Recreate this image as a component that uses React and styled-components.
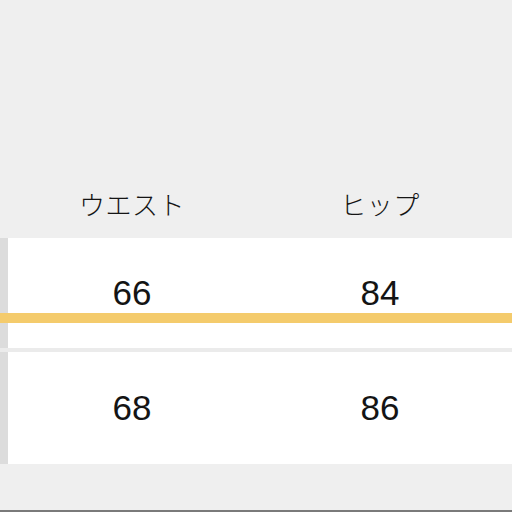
import styled, { createGlobalStyle } from 'styled-components';

const GlobalStyle = createGlobalStyle`
  html, body {
    margin: 0;
    padding: 0;
    background: #efefef;
  }
`;

const Page = styled.div`
  width: 512px;
  height: 512px;
  overflow: hidden;
  background: #efefef;
  display: flex;
  flex-direction: column;
  box-sizing: border-box;
  border-bottom: 2px solid #7a7a7a;
`;

const Table = styled.div`
  margin-top: 168px;
  display: flex;
  flex-direction: column;
`;

const HeaderRow = styled.div`
  display: flex;
  height: 70px;
  padding-left: 8px;
`;

const HeadCell = styled.div`
  flex: 0 0 248px;
  display: flex;
  align-items: center;
  justify-content: center;
  font-family: "Noto Sans CJK JP", "Liberation Sans", sans-serif;
  font-size: 26px;
  font-weight: 300;
  color: #151515;
  letter-spacing: 0.5px;
`;

const Row = styled.div`
  position: relative;
  display: flex;
  height: ${({ $h }) => $h}px;
  background: #fff;
  border-bottom: ${({ $divider }) => ($divider ? '4px solid #ebebeb' : 'none')};
`;

const Stub = styled.div`
  flex: 0 0 8px;
  background: #dcdcdc;
`;

const Cell = styled.div`
  flex: 0 0 248px;
  display: flex;
  align-items: center;
  justify-content: center;
  font-family: "Liberation Sans", Arial, sans-serif;
  font-size: 35px;
  color: #141414;
`;

const Highlight = styled.div`
  position: absolute;
  left: 0;
  right: 0;
  top: 75px;
  height: 10px;
  background: #f4cb6c;
`;

const rows = [
  { waist: 66, hip: 84, h: 110, mark: true },
  { waist: 68, hip: 86, h: 112 },
];

export default function App() {
  return (
    <>
      <GlobalStyle />
      <Page>
        <Table>
          <HeaderRow>
            <HeadCell>ウエスト</HeadCell>
            <HeadCell>ヒップ</HeadCell>
          </HeaderRow>
          {rows.map((r, i) => (
            <Row key={r.waist} $h={r.h} $divider={i < rows.length - 1}>
              <Stub />
              <Cell>{r.waist}</Cell>
              <Cell>{r.hip}</Cell>
              {r.mark && <Highlight />}
            </Row>
          ))}
        </Table>
      </Page>
    </>
  );
}
